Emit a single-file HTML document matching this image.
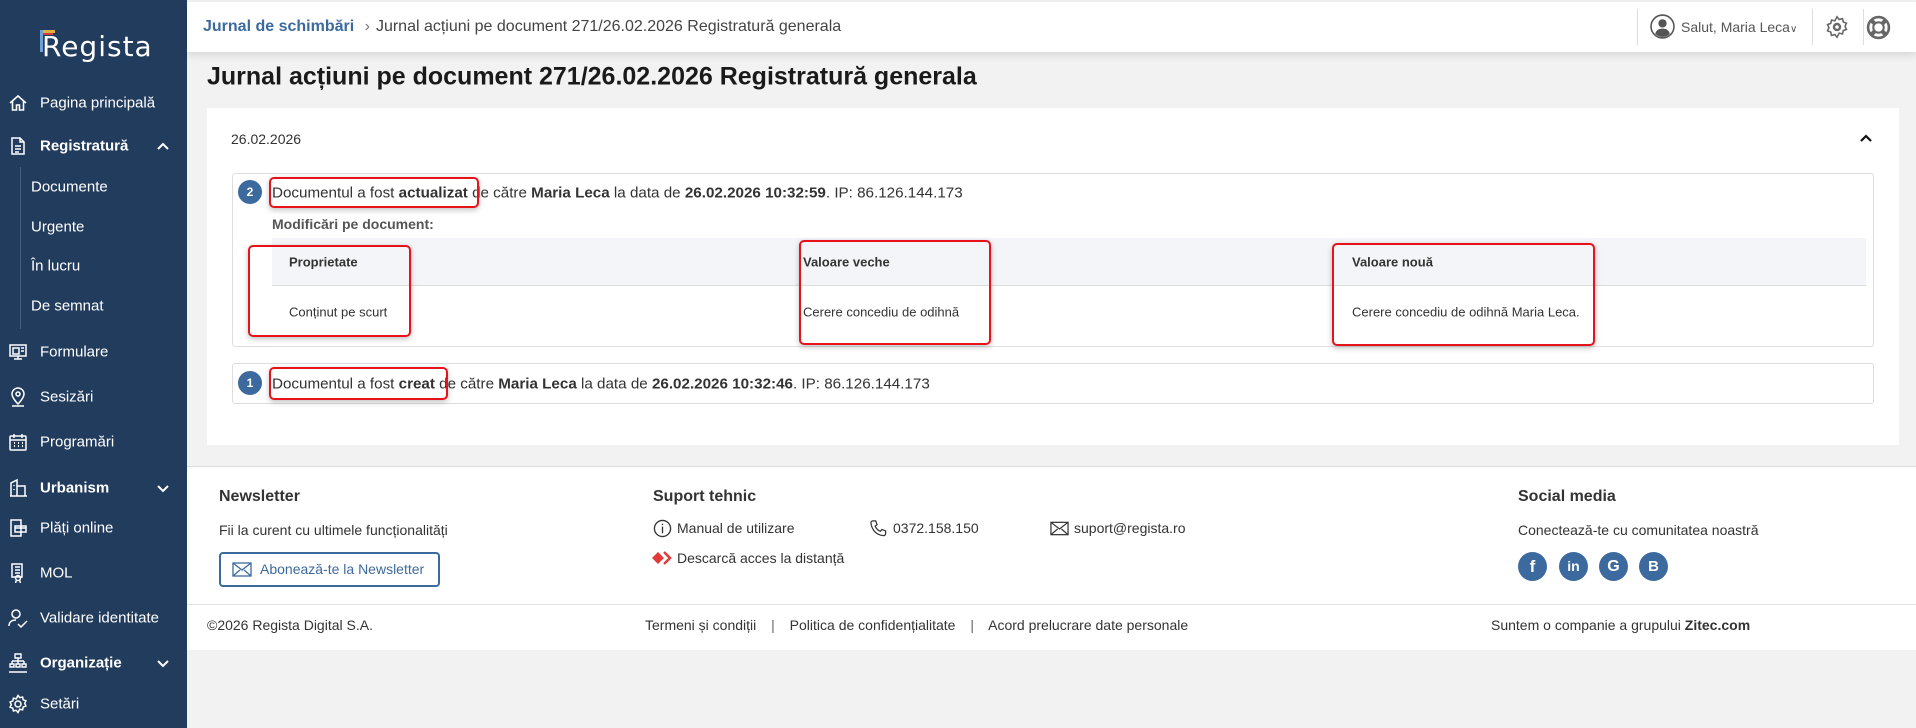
<!DOCTYPE html>
<html><head><meta charset="utf-8">
<style>
*{margin:0;padding:0;box-sizing:border-box}
body{width:1916px;height:728px;overflow:hidden;background:#f2f2f2;font-family:"Liberation Sans",Arial,sans-serif;color:#222;position:relative}
.a{position:absolute;white-space:nowrap}
#side{position:absolute;left:0;top:0;width:187px;height:728px;background:#223c5e;color:#fff}
.mi{position:absolute;left:40px;font-size:15px;color:#fff;transform:translateY(-50%)}
.mi.b{font-weight:bold}
.sub{position:absolute;left:31px;font-size:15px;color:#fff;transform:translateY(-50%)}
.ic{position:absolute;left:8px;width:20px;height:20px;transform:translateY(-50%)}
.chev{position:absolute;left:156px;width:14px;height:14px;transform:translateY(-50%)}
.red{position:absolute;border:2px solid #e8121b;border-radius:5px;box-shadow:0 2px 6px rgba(0,0,0,.25)}
.vc{transform:translateY(-50%)}
</style></head><body>
<div id="side">
  <div class="a" style="left:42px;top:30px;font-size:28px;font-family:'DejaVu Sans',sans-serif;letter-spacing:1px;color:#fff">Regista</div>
  <div class="a" style="left:40px;top:30px;width:3px;height:22px;background:#6fa0d8"></div>
  <div class="a" style="left:43px;top:30px;width:12px;height:3px;background:#e0b040"></div>
  <div class="a" style="left:43px;top:33px;width:10px;height:2px;background:#d04040"></div>

  <svg class="ic" style="top:103px" viewBox="0 0 20 20" fill="none" stroke="#fff" stroke-width="1.6"><path d="M2 10 L10 3 L18 10 M4.5 8v9h4v-5h3v5h4V8"/></svg>
  <div class="mi" style="top:103px">Pagina principală</div>
  <svg class="ic" style="top:146px" viewBox="0 0 20 20" fill="none" stroke="#fff" stroke-width="1.5"><path d="M4 2h8l4 4v12H4z M12 2v4h4 M7 10h6 M7 13h6 M7 16h4"/></svg>
  <div class="mi b" style="top:146px">Registratură</div>
  <svg class="chev" style="top:146px" viewBox="0 0 14 14" fill="none" stroke="#fff" stroke-width="2"><path d="M2 10l5-5 5 5"/></svg>
  <div class="a" style="left:20px;top:167px;width:1px;height:162px;background:#4a6080"></div>
  <div class="sub" style="top:187px">Documente</div>
  <div class="sub" style="top:227px">Urgente</div>
  <div class="sub" style="top:266px">În lucru</div>
  <div class="sub" style="top:306px">De semnat</div>
  <svg class="ic" style="top:352px" viewBox="0 0 20 20" fill="none" stroke="#fff" stroke-width="1.5"><path d="M2 3h16v11H2z M5 6h6v6H5z M13 6h3 M13 9h3 M6 17h8 M10 14v3"/></svg>
  <div class="mi" style="top:352px">Formulare</div>
  <svg class="ic" style="top:397px" viewBox="0 0 20 20" fill="none" stroke="#fff" stroke-width="1.5"><path d="M10 17s-6-6-6-10a6 6 0 0 1 12 0c0 4-6 10-6 10z"/><circle cx="10" cy="7" r="2"/><path d="M4 19h12"/></svg>
  <div class="mi" style="top:397px">Sesizări</div>
  <svg class="ic" style="top:442px" viewBox="0 0 20 20" fill="none" stroke="#fff" stroke-width="1.5"><rect x="2" y="4" width="16" height="14" rx="1"/><path d="M2 8h16 M6 2v4 M14 2v4"/><path d="M6 11h1M10 11h1M14 11h1M6 14h1M10 14h1M14 14h1" stroke-width="2"/></svg>
  <div class="mi" style="top:442px">Programări</div>
  <svg class="ic" style="top:488px" viewBox="0 0 20 20" fill="none" stroke="#fff" stroke-width="1.5"><path d="M2 18h17 M3 18V5l6-3v16 M9 8h8v10 M6 7v1 M6 11v1"/></svg>
  <div class="mi b" style="top:488px">Urbanism</div>
  <svg class="chev" style="top:488px" viewBox="0 0 14 14" fill="none" stroke="#fff" stroke-width="2"><path d="M2 5l5 5 5-5"/></svg>
  <svg class="ic" style="top:528px" viewBox="0 0 20 20" fill="none" stroke="#fff" stroke-width="1.5"><path d="M3 2h10v16H3z M7 8h11v6H7z M7 10h11"/></svg>
  <div class="mi" style="top:528px">Plăți online</div>
  <svg class="ic" style="top:573px" viewBox="0 0 20 20" fill="none" stroke="#fff" stroke-width="1.5"><path d="M4 1h10v13H4z M7 4h5M7 7h5M7 10h5"/><circle cx="10" cy="15" r="2.5"/><path d="M8.5 17l-1 3M11.5 17l1 3"/></svg>
  <div class="mi" style="top:573px">MOL</div>
  <svg class="ic" style="top:618px" viewBox="0 0 20 20" fill="none" stroke="#fff" stroke-width="1.5"><circle cx="8" cy="6" r="4"/><path d="M1 18c0-4 3-6 7-6 M10 16l3 3 6-6"/></svg>
  <div class="mi" style="top:618px">Validare identitate</div>
  <svg class="ic" style="top:663px" viewBox="0 0 20 20" fill="none" stroke="#fff" stroke-width="1.4"><path d="M7 1h6v4H7z M10 5v3 M4 8h12 M4 8v3 M10 8v3 M16 8v3 M2 11h4v3H2z M8 11h4v3H8z M14 11h4v3h-4z M1 19h18"/></svg>
  <div class="mi b" style="top:663px">Organizație</div>
  <svg class="chev" style="top:663px" viewBox="0 0 14 14" fill="none" stroke="#fff" stroke-width="2"><path d="M2 5l5 5 5-5"/></svg>
  <svg class="ic" style="top:704px" viewBox="0 0 20 20" fill="none" stroke="#fff" stroke-width="1.5"><circle cx="10" cy="10" r="3"/><path d="M10 1.5l1.8 2.2 2.8-.7.6 2.8 2.7 1-1.2 2.6 1.2 2.6-2.7 1-.6 2.8-2.8-.7L10 18.5l-1.8-2.2-2.8.7-.6-2.8-2.7-1 1.2-2.6L2.1 8l2.7-1 .6-2.8 2.8.7z"/></svg>
  <div class="mi" style="top:704px">Setări</div>
</div>

<!-- header -->
<div class="a" style="left:187px;top:2px;width:1729px;height:50px;background:#fff;box-shadow:0 3px 8px rgba(0,0,0,.12)"></div>
<div class="a vc" style="left:203px;top:27px;font-size:16px;color:#3d6a9e;font-weight:bold">Jurnal de schimbări <span style="color:#777;font-weight:normal;margin:0 6px">›</span><span style="color:#444;font-weight:normal">Jurnal acțiuni pe document 271/26.02.2026 Registratură generala</span></div>
<div class="a" style="left:1637px;top:9px;width:1px;height:36px;background:#ddd"></div>
<div class="a" style="left:1812px;top:9px;width:1px;height:36px;background:#ddd"></div>
<div class="a" style="left:1863px;top:9px;width:1px;height:36px;background:#ddd"></div>
<svg class="a" style="left:1650px;top:14px" width="25" height="25" viewBox="0 0 24 24"><circle cx="12" cy="12" r="11" fill="none" stroke="#555" stroke-width="1.5"/><circle cx="12" cy="9" r="4" fill="#555"/><path d="M5 19c1-4 4-5 7-5s6 1 7 5c-2 2-4 3-7 3s-5-1-7-3z" fill="#555"/></svg>
<div class="a vc" style="left:1681px;top:27px;font-size:14px;color:#555">Salut, Maria Leca<span style="font-size:10px">&#x2228;</span></div>
<svg class="a" style="left:1825px;top:15px" width="24" height="24" viewBox="0 0 20 20" fill="none" stroke="#666" stroke-width="1.3"><circle cx="10" cy="10" r="2.5" stroke-width="2"/><path d="M10 1.5l1.8 2.2 2.8-.7.6 2.8 2.7 1-1.2 2.6 1.2 2.6-2.7 1-.6 2.8-2.8-.7L10 18.5l-1.8-2.2-2.8.7-.6-2.8-2.7-1 1.2-2.6L2.1 8l2.7-1 .6-2.8 2.8.7z"/></svg>
<svg class="a" style="left:1866px;top:15px" width="25" height="25" viewBox="0 0 24 24"><circle cx="12" cy="12" r="10" fill="none" stroke="#666" stroke-width="2.5"/><circle cx="12" cy="12" r="5" fill="none" stroke="#666" stroke-width="2"/><path d="M5 5l4 4M19 5l-4 4M5 19l4-4M19 19l-4-4" stroke="#666" stroke-width="4"/></svg>

<div class="a vc" style="left:207px;top:77px;font-size:25px;font-weight:bold;color:#1a1a1a">Jurnal acțiuni pe document 271/26.02.2026 Registratură generala</div>

<!-- card -->
<div class="a" style="left:207px;top:108px;width:1692px;height:337px;background:#fff"></div>
<div class="a vc" style="left:231px;top:139px;font-size:14px;color:#333">26.02.2026</div>
<svg class="a" style="left:1859px;top:132px" width="14" height="12" viewBox="0 0 14 12" fill="none" stroke="#111" stroke-width="2.2"><path d="M2 9l5-5 5 5"/></svg>

<div class="a" style="left:232px;top:173px;width:1642px;height:174px;border:1px solid #ddd;border-radius:3px"></div>
<div class="a" style="left:238px;top:180px;width:24px;height:24px;border-radius:50%;background:#3d6a9e;color:#fff;font-size:12px;font-weight:bold;text-align:center;line-height:24px">2</div>
<div class="a vc" style="left:272px;top:193px;font-size:15.2px;color:#333">Documentul a fost <b>actualizat</b> de către <b>Maria Leca</b> la data de <b>26.02.2026 10:32:59</b>. IP: 86.126.144.173</div>
<div class="a vc" style="left:272px;top:224px;font-size:14px;font-weight:bold;color:#555">Modificări pe document:</div>
<div class="a" style="left:272px;top:238px;width:1594px;height:48px;background:#f4f5f8;border-bottom:1px solid #ddd"></div>
<div class="a vc" style="left:289px;top:262px;font-size:13px;font-weight:bold;color:#333">Proprietate</div>
<div class="a vc" style="left:803px;top:262px;font-size:13px;font-weight:bold;color:#333">Valoare veche</div>
<div class="a vc" style="left:1352px;top:262px;font-size:13px;font-weight:bold;color:#333">Valoare nouă</div>
<div class="a vc" style="left:289px;top:312px;font-size:13px;color:#333">Conținut pe scurt</div>
<div class="a vc" style="left:803px;top:312px;font-size:13px;color:#333">Cerere concediu de odihnă</div>
<div class="a vc" style="left:1352px;top:312px;font-size:13px;color:#333">Cerere concediu de odihnă Maria Leca.</div>
<div class="a" style="left:272px;top:346px;width:1594px;height:1px;background:#e2e2e2"></div>

<div class="a" style="left:232px;top:363px;width:1642px;height:41px;border:1px solid #ddd;border-radius:3px"></div>
<div class="a" style="left:238px;top:371px;width:24px;height:24px;border-radius:50%;background:#3d6a9e;color:#fff;font-size:12px;font-weight:bold;text-align:center;line-height:24px">1</div>
<div class="a vc" style="left:272px;top:384px;font-size:15.2px;color:#333">Documentul a fost <b>creat</b> de către <b>Maria Leca</b> la data de <b>26.02.2026 10:32:46</b>. IP: 86.126.144.173</div>

<div class="red" style="left:269px;top:177px;width:210px;height:31px"></div>
<div class="red" style="left:248px;top:245px;width:163px;height:92px"></div>
<div class="red" style="left:799px;top:240px;width:192px;height:105px"></div>
<div class="red" style="left:1332px;top:243px;width:263px;height:103px"></div>
<div class="red" style="left:269px;top:367px;width:179px;height:33px"></div>

<!-- footer -->
<div class="a" style="left:187px;top:466px;width:1729px;height:184px;background:#fff;border-top:1px solid #ddd"></div>
<div class="a" style="left:187px;top:604px;width:1729px;height:1px;background:#e2e2e2"></div>
<div class="a vc" style="left:219px;top:497px;font-size:16px;font-weight:bold;color:#333">Newsletter</div>
<div class="a vc" style="left:219px;top:530px;font-size:14px;color:#333">Fii la curent cu ultimele funcționalități</div>
<div class="a" style="left:219px;top:552px;width:221px;height:35px;border:2px solid #3d6a9e;border-radius:4px"></div>
<svg class="a" style="left:232px;top:562px" width="20" height="15" viewBox="0 0 20 15" fill="none" stroke="#3d6a9e" stroke-width="1.3"><rect x="1" y="1" width="18" height="13"/><path d="M1 1l9 7 9-7M1 14l7-6M19 14l-7-6"/></svg>
<div class="a vc" style="left:260px;top:569px;font-size:14px;color:#3d6a9e">Abonează-te la Newsletter</div>

<div class="a vc" style="left:653px;top:497px;font-size:16px;font-weight:bold;color:#333">Suport tehnic</div>
<svg class="a" style="left:653px;top:519px" width="19" height="19" viewBox="0 0 20 20" fill="none" stroke="#333" stroke-width="1.4"><circle cx="10" cy="10" r="8.5"/><path d="M10 8v7M10 5v1.5"/></svg>
<div class="a vc" style="left:677px;top:528px;font-size:14px;color:#333">Manual de utilizare</div>
<svg class="a" style="left:869px;top:519px" width="19" height="19" viewBox="0 0 20 20" fill="none" stroke="#333" stroke-width="1.3"><path d="M4 2l3 0 1.5 4-2 1.5c1 2.5 3 4.5 5.5 5.5l1.5-2 4 1.5v3c0 1-1 2-2 2C8 17 3 12 2 4c0-1 1-2 2-2z"/></svg>
<div class="a vc" style="left:893px;top:528px;font-size:14px;color:#333">0372.158.150</div>
<svg class="a" style="left:1050px;top:521px" width="19" height="15" viewBox="0 0 20 15" fill="none" stroke="#333" stroke-width="1.3"><rect x="1" y="1" width="18" height="13"/><path d="M1 1l9 7 9-7M1 14l7-6M19 14l-7-6"/></svg>
<div class="a vc" style="left:1074px;top:528px;font-size:14px;color:#333">suport@regista.ro</div>
<svg class="a" style="left:652px;top:550px" width="20" height="16" viewBox="0 0 20 16"><path d="M0 8l6-6 6 6-6 6z" fill="#e23a3a"/><path d="M12 2l6 6-6 6" fill="none" stroke="#e23a3a" stroke-width="2.5"/></svg>
<div class="a vc" style="left:677px;top:558px;font-size:14px;color:#333">Descarcă acces la distanță</div>

<div class="a vc" style="left:1518px;top:497px;font-size:16px;font-weight:bold;color:#333">Social media</div>
<div class="a vc" style="left:1518px;top:530px;font-size:14px;color:#333">Conectează-te cu comunitatea noastră</div>
<div class="a" style="left:1518px;top:552px;width:29px;height:29px;border-radius:50%;background:#3d6a9e;color:#fff;font-weight:bold;font-size:17px;text-align:center;line-height:29px">f</div>
<div class="a" style="left:1559px;top:552px;width:29px;height:29px;border-radius:50%;background:#3d6a9e;color:#fff;font-weight:bold;font-size:14px;text-align:center;line-height:29px">in</div>
<div class="a" style="left:1599px;top:552px;width:29px;height:29px;border-radius:50%;background:#3d6a9e;color:#fff;font-weight:bold;font-size:16px;text-align:center;line-height:29px">G</div>
<div class="a" style="left:1639px;top:552px;width:29px;height:29px;border-radius:50%;background:#3d6a9e;color:#fff;font-weight:bold;font-size:15px;text-align:center;line-height:29px">B</div>

<div class="a vc" style="left:207px;top:625px;font-size:14px;color:#333">©2026 Regista Digital S.A.</div>
<div class="a vc" style="left:645px;top:625px;font-size:14px;color:#333">Termeni și condiții <span style="margin:0 11px;color:#666">|</span> Politica de confidențialitate <span style="margin:0 11px;color:#666">|</span> Acord prelucrare date personale</div>
<div class="a vc" style="left:1491px;top:625px;font-size:14px;color:#333">Suntem o companie a grupului <b>Zitec.com</b></div>
</body></html>
